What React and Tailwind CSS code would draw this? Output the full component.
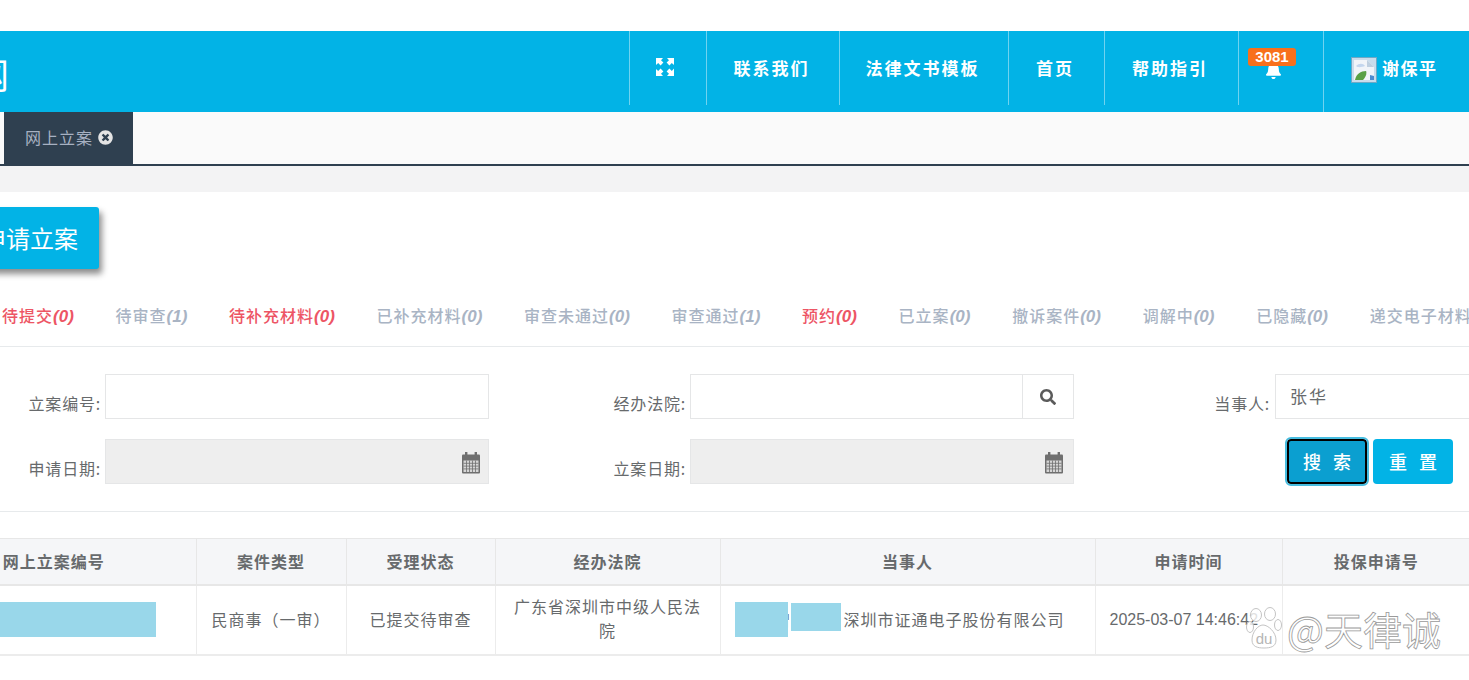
import { FaTimesCircle, FaBell, FaSearch } from 'react-icons/fa';

const navItems = [
  { label: '联系我们', w: 'w-[133px]' },
  { label: '法律文书模板', w: 'w-[169px]' },
  { label: '首页', w: 'w-[96px]' },
  { label: '帮助指引', w: 'w-[134px]' },
];

const statusTabs = [
  { label: '待提交', count: 0, red: true },
  { label: '待审查', count: 1 },
  { label: '待补充材料', count: 0, red: true },
  { label: '已补充材料', count: 0 },
  { label: '审查未通过', count: 0 },
  { label: '审查通过', count: 1 },
  { label: '预约', count: 0, red: true },
  { label: '已立案', count: 0 },
  { label: '撤诉案件', count: 0 },
  { label: '调解中', count: 0 },
  { label: '已隐藏', count: 0 },
  { label: '递交电子材料', count: 0 },
];

function ExpandIcon() {
  return (
    <svg width="20" height="20" viewBox="0 0 20 20" fill="#fff">
      <path d="M1 1h7L6 3.2 8.4 5.6 5.6 8.4 3.2 6 1 8z" />
      <path d="M19 1h-7l2 2.2-2.4 2.4 2.8 2.8L16.8 6 19 8z" />
      <path d="M1 19h7l-2-2.2 2.4-2.4-2.8-2.8L3.2 14 1 12z" />
      <path d="M19 19h-7l2-2.2-2.4-2.4 2.8-2.8 2.4 2.4 2.2-2.4z" />
    </svg>
  );
}

function BrokenImage() {
  return (
    <svg width="26" height="26" viewBox="0 0 26 26" className="shrink-0 mt-[1px]">
      <rect x="0.5" y="0.5" width="25" height="25" fill="#c9dcec" stroke="#6fa9c6" />
      <path d="M3 3h13l7 7v13H3z" fill="#f1f4f9" />
      <path d="M16 3v7h7z" fill="#bfcfe0" />
      <path d="M5 9c3-3 7-3 9 0-3 1-7 2-9 0z" fill="#c4d6ee" />
      <path d="M4 23c1-6 6-9 11-9 1 2 0 6-3 9z" fill="#5aa046" />
      <path d="M19 18l4 1v4h-4z" fill="#4d8bd0" />
    </svg>
  );
}

function CalendarIcon() {
  return (
    <svg width="20" height="24" viewBox="0 0 20 24" fill="#6f6f6f">
      <rect x="4" y="1" width="2.4" height="5" />
      <rect x="13.6" y="1" width="2.4" height="5" />
      <rect x="1" y="3.5" width="18" height="19" rx="1" />
      <g fill="#d6d6d6">
        <rect x="2.5" y="9.5" width="15" height="11.5" />
      </g>
      <g stroke="#6f6f6f" strokeWidth="0.8">
        <path d="M2.5 12.3h15M2.5 15.1h15M2.5 17.9h15M5.5 9.5v11.5M8.5 9.5v11.5M11.5 9.5v11.5M14.5 9.5v11.5" />
      </g>
    </svg>
  );
}

function DisabledDate({ className = 'pr-[7px]' }) {
  return (
    <div className={'w-[384px] shrink-0 h-[45px] bg-[#eeeeee] border border-[#e5e6e7] flex justify-end items-center pt-[2px] ' + className}>
      <CalendarIcon />
    </div>
  );
}

function FieldLabel({ children, className = '' }) {
  return (
    <label className={'shrink-0 pr-[4px] text-right pt-[17px] leading-[24px] tracking-[0.8px] ' + className}>
      {children}
    </label>
  );
}

function Th({ children, className = '' }) {
  return (
    <th className={'h-[46px] border-r border-b-2 border-[#e7e7e7] text-center font-semibold text-[#676a6c] ' + className}>
      {children}
    </th>
  );
}

function Td({ children, className = '' }) {
  return (
    <td className={'h-[70px] border-r border-b-2 border-[#ececec] text-center text-[#676a6c] ' + className}>
      {children}
    </td>
  );
}

export default function App() {
  return (
    <div className="relative w-[1469px] h-[680px] overflow-hidden bg-white pt-[31px] font-['Noto_Sans_CJK_SC','Noto_Sans',sans-serif]">
      {/* Header */}
      <header className="h-[81px] bg-[#02b3e6] flex items-start justify-between text-white">
        <div className="h-full flex items-center overflow-hidden w-[10px]">
          <span className="text-[36px] leading-none shrink-0 -ml-[27px] pt-[2px]">网</span>
        </div>
        <nav className="flex h-[74px] items-stretch text-[17px] font-bold tracking-[2px]">
          <div className="w-[77px] border-l border-[#6fd3f0] flex items-center justify-center pr-[6px] pb-[2px]">
            <ExpandIcon />
          </div>
          {navItems.map((item) => (
            <div key={item.label} className={item.w + ' border-l border-[#6fd3f0] flex items-center justify-center pr-[3px]'}>
              {item.label}
            </div>
          ))}
          <div className="relative w-[85px] border-l border-[#6fd3f0]">
            <FaBell className="absolute left-[26px] top-[31px] text-[17px]" />
            <span className="absolute left-[9px] top-[17px] h-[18px] w-[48px] rounded-[3px] bg-[#f8701c] text-center text-[15px] leading-[18px] font-semibold tracking-normal font-['Liberation_Sans',sans-serif]">
              3081
            </span>
          </div>
          <div className="w-[146px] h-[81px] border-l border-[#6fd3f0] flex items-start pt-[25px] pl-[27px] gap-[5px]">
            <BrokenImage />
            <span className="text-[17px] leading-[24px] tracking-[1.5px]">谢保平</span>
          </div>
        </nav>
      </header>

      {/* Tabs */}
      <div className="h-[54px] bg-[#fafafa] border-b-2 border-[#2f4050] pl-[4px] flex items-stretch">
        <div className="w-[129px] bg-[#2f4050] border-l border-[#2f4050] flex items-center pl-[20px] gap-[5px] text-[#a7b1c2] text-[16px] tracking-[1px] pb-[2px]">
          网上立案
          <FaTimesCircle className="text-[15px] text-[#e4e4e4]" />
        </div>
      </div>
      <div className="h-[26px] bg-[#f3f3f4]" />

      {/* Main */}
      <main>
        <div className="pt-[15px] h-[77px]">
          <button className="block h-[62px] w-[121px] -ml-[22px] pr-[21px] rounded-[3px] bg-[#02b3e6] text-white text-[24px] shadow-[3px_5px_6px_rgba(0,0,0,0.45)] text-right whitespace-nowrap">
            申请立案
          </button>
        </div>

        <div className="h-[78px] border-b border-[#e7eaec] flex items-center gap-[41.7px] pl-[2px] pt-[18px] text-[16px] tracking-[1px] font-medium whitespace-nowrap text-[#a9b4c4]">
          {statusTabs.map((tab) => (
            <span key={tab.label} className={'shrink-0 ' + (tab.red ? 'text-[#ed5565]' : '')}>
              {tab.label}
              <em className="font-bold text-[17px] tracking-normal font-['Liberation_Sans',sans-serif]">({tab.count})</em>
            </span>
          ))}
        </div>

        {/* Search form */}
        <div className="pt-[27px] h-[165px] border-b border-[#e7eaec] text-[#676a6c] text-[16px]">
          <div className="flex h-[45px]">
            <FieldLabel className="w-[105px]">立案编号:</FieldLabel>
            <div className="w-[384px] shrink-0 h-[45px] border border-[#e5e6e7] bg-white" />
            <FieldLabel className="w-[201px]">经办法院:</FieldLabel>
            <div className="w-[384px] shrink-0 h-[45px] border border-[#e5e6e7] bg-white flex justify-end">
              <div className="w-[51px] border-l border-[#e5e6e7] flex items-center justify-center text-[#5b5b5b]">
                <FaSearch className="text-[16px]" />
              </div>
            </div>
            <FieldLabel className="w-[201px] pr-[5px]">当事人:</FieldLabel>
            <div className="w-[220px] shrink-0 h-[45px] border border-[#e5e6e7] bg-white pl-[14px] pt-[9px] leading-[24px] text-[17px] tracking-[2px]">张华</div>
          </div>
          <div className="flex h-[45px] mt-[20px]">
            <FieldLabel className="w-[105px]">申请日期:</FieldLabel>
            <DisabledDate />
            <FieldLabel className="w-[201px]">立案日期:</FieldLabel>
            <DisabledDate className="pr-[9px]" />
            <div className="ml-[213px] flex gap-[6px] shrink-0">
              <button className="w-[80px] h-[45px] rounded-[4px] bg-[#0b9fd0] text-white text-[18px] font-medium tracking-[12px] pl-[12px] whitespace-nowrap border-2 border-black outline outline-2 outline-[#47bde0]">
                搜索
              </button>
              <button className="w-[80px] h-[45px] rounded-[4px] bg-[#02b3e6] text-white text-[18px] font-medium tracking-[12px] pl-[12px] whitespace-nowrap">
                重置
              </button>
            </div>
          </div>
        </div>

        {/* Table */}
        <div className="mt-[26px] -ml-[88px] w-[1558px]">
          <table className="table-fixed w-full border-collapse border-t border-[#e7e7e7] text-[16px] tracking-[1px]">
            <colgroup>
              <col className="w-[284px]" />
              <col className="w-[150px]" />
              <col className="w-[149px]" />
              <col className="w-[225px]" />
              <col className="w-[375px]" />
              <col className="w-[187px]" />
              <col className="w-[188px]" />
            </colgroup>
            <thead className="bg-[#f5f6f8]">
              <tr>
                <Th>网上立案编号</Th>
                <Th>案件类型</Th>
                <Th>受理状态</Th>
                <Th>经办法院</Th>
                <Th>当事人</Th>
                <Th>申请时间</Th>
                <Th className="border-r-0">投保申请号</Th>
              </tr>
            </thead>
            <tbody>
              <tr>
                <Td>
                  <span className="inline-block align-middle w-[204px] h-[35px] bg-[#99d7ea]" />
                </Td>
                <Td className="pb-[2px]">民商事（一审）</Td>
                <Td className="pb-[2px]">已提交待审查</Td>
                <Td className="px-[16px] pb-[3px] leading-[24px]">广东省深圳市中级人民法院</Td>
                <Td>
                  <div className="flex items-center pl-[14px] whitespace-nowrap">
                    <span className="w-[53px] h-[35px] bg-[#99d7ea] shrink-0" />
                    <span className="w-[3px] overflow-hidden shrink-0 flex justify-end tracking-normal -mt-[2px]">曾</span>
                    <span className="w-[50px] h-[28px] bg-[#99d7ea] shrink-0 -mt-[6px]" />
                    <span className="ml-[3px] -mt-[2px]">深圳市证通电子股份有限公司</span>
                  </div>
                </Td>
                <Td className="font-['Liberation_Sans',sans-serif] tracking-normal whitespace-nowrap text-left pl-[14px]">2025-03-07 14:46:42</Td>
                <Td className="border-r-0"> </Td>
              </tr>
            </tbody>
          </table>
        </div>
      </main>

      {/* Watermark */}
      <div className="absolute left-[1246px] top-[606px] flex items-center gap-[5px] pointer-events-none">
        <svg width="36" height="44" viewBox="0 0 36 44" fill="rgba(255,255,255,0.8)" stroke="#c4c4c4" strokeWidth="1">
          <ellipse cx="10" cy="9" rx="5.5" ry="6.5" />
          <ellipse cx="24" cy="8" rx="5.5" ry="6.5" />
          <ellipse cx="32" cy="19" rx="3.5" ry="5.5" />
          <ellipse cx="4" cy="21" rx="3.5" ry="5.5" />
          <path d="M6 34c0-8 6-15 11-15s13 7 13 15c0 7-6 8-12 8S6 41 6 34z" />
          <text x="18" y="38" textAnchor="middle" fontSize="15" fill="#b5b5b5" stroke="none" fontFamily="'Liberation Sans', sans-serif">du</text>
        </svg>
        <span className="text-[39px] leading-none text-white/70 [-webkit-text-stroke:0.8px_#9a9a9a] whitespace-nowrap">@天律诚</span>
      </div>
    </div>
  );
}
